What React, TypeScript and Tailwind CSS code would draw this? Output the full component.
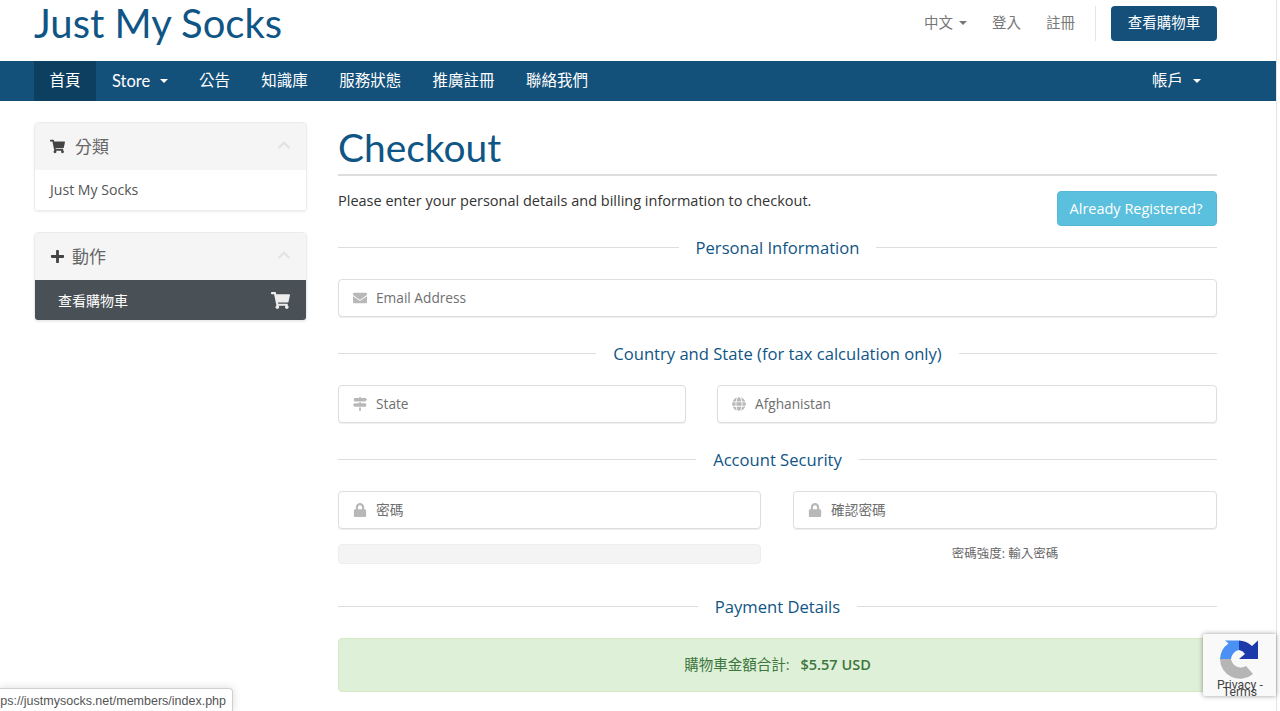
import { FaChevronUp, FaEnvelope, FaGlobe, FaLock, FaMapSigns, FaPlus, FaShoppingCart } from 'react-icons/fa'
import type { ReactNode } from 'react'

const cjk = '"Noto Sans CJK TC"'
const navLinks = ['公告', '知識庫', '服務狀態', '推廣註冊', '聯絡我們']

function Caret({ className }: { className?: string }) {
  return <span className={`inline-block w-0 h-0 border-x-[4px] border-x-transparent border-t-[4px] ${className}`} />
}

function SectionTitle({ children }: { children: ReactNode }) {
  return (
    <div className="flex items-center gap-[17px] h-[24px]">
      <div className="flex-1 h-px mb-[2px] bg-[#dddddd]" />
      <h3 className="text-[16.6px] leading-[24px] text-[#0f5585]">{children}</h3>
      <div className="flex-1 h-px mb-[2px] bg-[#dddddd]" />
    </div>
  )
}

function Field({ icon, label, className }: { icon: ReactNode; label: string; className?: string }) {
  return (
    <div className={`flex items-center h-[38px] border border-[#dedede] rounded-[4px] bg-white shadow-[0_1px_1px_rgba(0,0,0,0.07)] text-[13.7px] text-[#6f6f6f] ${className ?? ''}`}>
      <span className="w-[37px] pl-[14px] text-[14px] text-[#b8b8b8]">{icon}</span>
      <span>{label}</span>
    </div>
  )
}

function SidePanel({ icon, title, children, gap }: { icon: ReactNode; title: string; children: ReactNode; gap: string }) {
  return (
    <div className="rounded-[4px] border border-[#ececec] shadow-[0_1px_2px_rgba(0,0,0,0.08)] overflow-hidden">
      <div className="flex items-center h-[47px] bg-[#f5f5f5] pl-[15px] pr-[15px] text-[#5c5c5c]">
        <span className={`text-[15px] text-[#444444] ${gap}`}>{icon}</span>
        <span className="text-[17px] text-[#666666]">{title}</span>
        <FaChevronUp className="ml-auto -mt-[4px] text-[14px] text-[#e2e2e2]" />
      </div>
      {children}
    </div>
  )
}

export default function App() {
  return (
    <div
      className="relative h-[711px] w-[1280px] overflow-hidden bg-white text-[#333333]"
      style={{ fontFamily: `"Open Sans", ${cjk}, sans-serif` }}
    >
      <div className="w-[1276px] h-[711px]">
        <header className="flex items-center h-[61px] pl-[34px] pr-[59px]">
          <h1 className="text-[40px] leading-[42px] -mt-[15px] text-[#0f5585]" style={{ fontFamily: `Lato, sans-serif`, fontWeight: 400 }}>
            Just My Socks
          </h1>
          <div className="ml-auto flex items-center text-[14.5px] text-[#777777] -mt-[15px]">
            <span className="flex items-center gap-[6px] -mt-px">中文<Caret className="border-t-[#777777]" /></span>
            <span className="ml-[25px] -mt-px">登入</span>
            <span className="ml-[25px] -mt-px">註冊</span>
            <div className="ml-[20px] w-px h-[35px] bg-[#e5e5e5]" />
            <button className="ml-[15px] w-[106px] h-[35px] rounded-[4px] bg-[#14507a] text-white text-[14.5px]">查看購物車</button>
          </div>
        </header>

        <nav className="flex items-stretch h-[40px] pl-[34px] pr-[59px] bg-[#14517a] text-white text-[15.5px]">
          <a className="flex items-center w-[62px] justify-center bg-[#0d3f60]">首頁</a>
          <a className="flex items-center gap-[10px] pl-[16px] pr-[15px] text-[16.5px]" style={{ fontFamily: 'Lato, sans-serif' }}>
            Store<Caret className="border-t-white" />
          </a>
          {navLinks.map((link) => (
            <a key={link} className="flex items-center px-[15.7px]">{link}</a>
          ))}
          <a className="ml-auto flex items-center gap-[10px] px-[16px]">帳戶<Caret className="border-t-white" /></a>
        </nav>

        <div className="flex gap-[31px] pl-[34px] pr-[59px] pt-[21px]">
          <aside className="w-[273px] flex flex-col gap-[21px]">
            <SidePanel icon={<FaShoppingCart />} title="分類" gap="mr-[10px]">
              <div className="flex items-center h-[40px] pl-[15px] pb-px text-[14.1px] text-[#555555] bg-white">Just My Socks</div>
            </SidePanel>
            <SidePanel icon={<FaPlus />} title="動作" gap="mr-[7px]">
              <div className="flex items-center h-[40px] pl-[23px] pr-[16px] bg-[#495056] text-white text-[14px]">
                查看購物車
                <FaShoppingCart className="ml-auto text-[19px] text-[#eeeeee]" />
              </div>
            </SidePanel>
          </aside>

          <main className="w-[879px]">
            <h2 className="h-[54px] border-b-2 border-[#dddddd] text-[38.9px] leading-[50px] text-[#0f5585]" style={{ fontFamily: 'Lato, sans-serif', fontWeight: 400 }}>
              Checkout
            </h2>
            <div className="flex justify-between items-start pt-[15px] h-[60px]">
              <p className="text-[14.5px] leading-[20px] text-[#333333]">Please enter your personal details and billing information to checkout.</p>
              <button className="w-[160px] h-[35px] pr-[2px] rounded-[4px] bg-[#5bc0de] border border-[#56b7d6] text-white text-[14.5px]">Already Registered?</button>
            </div>

            <SectionTitle>Personal Information</SectionTitle>
            <Field className="mt-[19px]" icon={<FaEnvelope />} label="Email Address" />

            <div className="mt-[25px]"><SectionTitle>Country and State (for tax calculation only)</SectionTitle></div>
            <div className="flex gap-[31px] mt-[19px]">
              <Field className="w-[348px]" icon={<FaMapSigns />} label="State" />
              <Field className="flex-1" icon={<FaGlobe />} label="Afghanistan" />
            </div>

            <div className="mt-[25px]"><SectionTitle>Account Security</SectionTitle></div>
            <div className="grid grid-cols-[423px_1fr] gap-x-[32px] mt-[19px]">
              <Field icon={<FaLock />} label="密碼" />
              <Field icon={<FaLock />} label="確認密碼" />
              <div className="mt-[15px] h-[20px] rounded-[4px] bg-[#f4f4f4] border border-[#eeeeee]" />
              <div className="mt-[15px] h-[20px] flex items-center justify-center text-[12.5px] text-[#666666]">密碼強度: 輸入密碼</div>
            </div>

            <div className="mt-[31px]"><SectionTitle>Payment Details</SectionTitle></div>
            <div className="flex items-center justify-center gap-[11px] mt-[19px] h-[54px] rounded-[4px] bg-[#dff0d8] border border-[#d6e9c6] text-[14.5px] text-[#3c763d]">
              <span>購物車金額合計:</span>
              <strong className="font-semibold">$5.57 USD</strong>
            </div>
          </main>
        </div>
      </div>

      <div className="absolute top-0 right-0 bottom-0 w-[4px] border-l border-[#e4e4e4] bg-white" />

      <div className="absolute left-0 bottom-0 h-[23px] w-[233px] flex items-center justify-end pr-[6px] pt-[2px] bg-white border-t border-r border-[#d0d0d0] rounded-tr-[4px] shadow-[0_0_8px_rgba(0,0,0,0.15)] text-[12.5px] text-[#555555] overflow-hidden whitespace-nowrap" style={{ fontFamily: '"Liberation Sans", sans-serif' }}>
        ps://justmysocks.net/members/index.php
      </div>

      <div className="absolute left-[1203px] top-[634px] w-[73px] h-[62px] bg-[#f9f9f9] rounded-l-[2px] shadow-[0_0_5px_rgba(0,0,0,0.4)] overflow-hidden">
        <svg className="absolute left-[17px] top-[6px]" width="40" height="40" viewBox="0 0 40 40">
          <path d="M5 0.500 H19 V10 A10 10 0 0 0 11 19 H0 A20 20 0 0 1 8.500 3.500 Z" fill="#4a90f5" />
          <path d="M19 0.500 A20 20 0 0 1 32 6 L38 0.500 V19 H19 L25 14 A9 9 0 0 0 19 10 Z" fill="#1c3aa9" />
          <path d="M0 19 H11 A10 10 0 0 0 26 26 L33 34 A20 20 0 0 1 0 19 Z" fill="#b5b5b5" />
        </svg>
        <div className="absolute left-[14px] top-[48px] text-[12.2px] leading-[7px] text-[#444444] text-center whitespace-nowrap" style={{ fontFamily: 'Roboto, sans-serif' }}>
          Privacy -<br />Terms
        </div>
      </div>
    </div>
  )
}
